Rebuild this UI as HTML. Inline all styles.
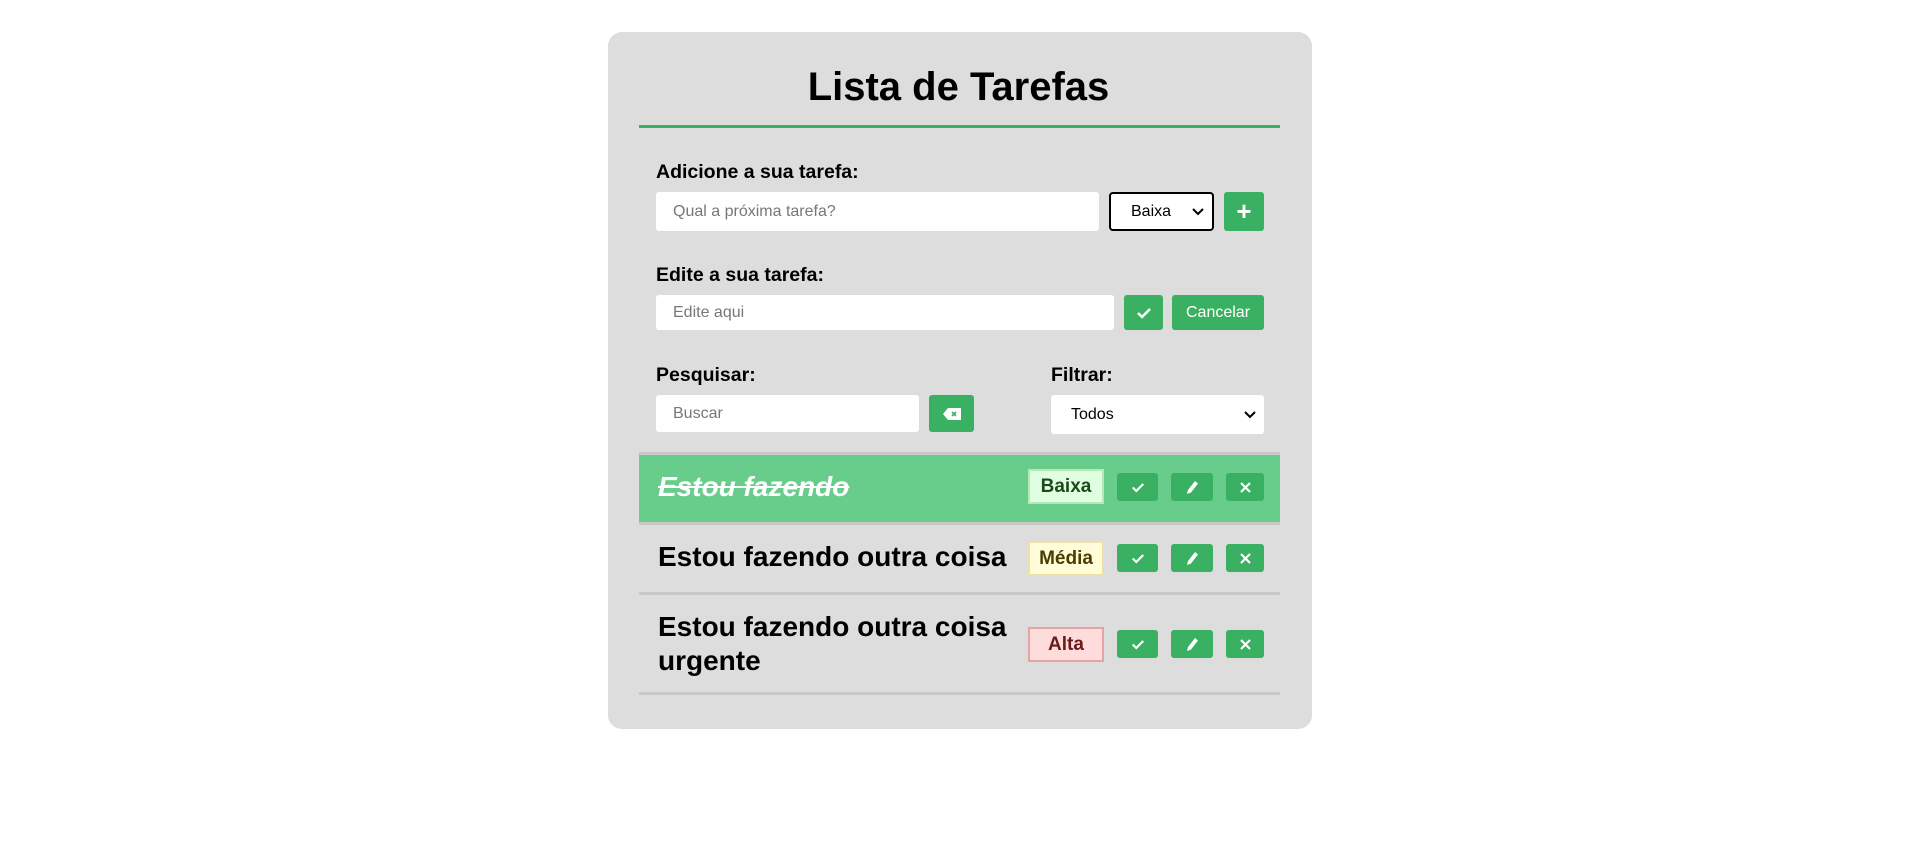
<!DOCTYPE html>
<html><head><meta charset="utf-8"><style>
*{box-sizing:border-box;margin:0;padding:0}
body{width:1917px;height:865px;background:#fff;font-family:"Liberation Sans",sans-serif;position:relative;overflow:hidden}
.c{position:absolute;left:608px;top:32px;width:704px;height:697px;background:#dddddd;border-radius:14px}
.a{position:absolute}
h1{position:absolute;left:0;width:100%;top:62px;text-align:center;font-size:40px;font-weight:bold;color:#000;line-height:50px}
.line{position:absolute;left:639px;width:641px;height:3px;background:#3ab062}
.lbl{position:absolute;font-size:19.5px;font-weight:bold;color:#000}
.in{position:absolute;background:#fff;border-radius:3px;font-size:16px;color:#777;padding-left:17px;display:flex;align-items:center}
.btn{position:absolute;background:#39b062;border-radius:3px;color:#fff;display:flex;align-items:center;justify-content:center}
.sel{position:absolute;background:#fff;border-radius:3px;font-size:16px;color:#000;display:flex;align-items:center;justify-content:space-between;padding:0 8px 0 20px}
.sep{position:absolute;left:639px;width:641px;height:3px;background:#c8c8c8}
.tt{position:absolute;left:658px;font-size:28px;font-weight:bold;color:#000;line-height:34px}
.bd{position:absolute;left:1028px;width:76px;font-size:19px;font-weight:bold;display:flex;align-items:center;justify-content:center;border:2px solid}
</style></head><body>
<div class="c"></div>
<h1>Lista de Tarefas</h1>
<div class="line" style="top:125px"></div>

<div class="lbl" style="left:656px;top:161px">Adicione a sua tarefa:</div>
<div class="in" style="left:656px;top:192px;width:443px;height:39px">Qual a próxima tarefa?</div>
<div class="sel" style="left:1109px;top:192px;width:105px;height:39px;border:2px solid #000;border-radius:4px;padding-left:20px">Baixa<svg width="12" height="8" viewBox="0 0 12 8"><path d="M1 1l5 5 5-5" stroke="#000" stroke-width="2" fill="none"/></svg></div>
<div class="btn" style="left:1224px;top:192px;width:40px;height:39px;font-size:26px;font-weight:bold">+</div>

<div class="lbl" style="left:656px;top:264px">Edite a sua tarefa:</div>
<div class="in" style="left:656px;top:295px;width:458px;height:35px">Edite aqui</div>
<div class="btn" style="left:1124px;top:295px;width:39px;height:35px"><svg width="16" height="12" viewBox="0 0 16 12"><path d="M2 6l4 4 8-8" stroke="#fff" stroke-width="2.5" fill="none"/></svg></div>
<div class="btn" style="left:1172px;top:295px;width:92px;height:35px;font-size:16px">Cancelar</div>

<div class="lbl" style="left:656px;top:364px">Pesquisar:</div>
<div class="lbl" style="left:1051px;top:364px">Filtrar:</div>
<div class="in" style="left:656px;top:395px;width:263px;height:37px">Buscar</div>
<div class="btn" style="left:929px;top:395px;width:45px;height:37px"><svg width="20" height="14" viewBox="0 0 20 14"><path d="M6 1h13v12H6L1 7z" fill="#fff"/><path d="M10 5l4 4M14 5l-4 4" stroke="#39b062" stroke-width="1.6"/></svg></div>
<div class="sel" style="left:1051px;top:395px;width:213px;height:39px">Todos<svg width="12" height="8" viewBox="0 0 12 8"><path d="M1 1l5 5 5-5" stroke="#000" stroke-width="2" fill="none"/></svg></div>

<div class="sep" style="top:452px"></div>
<div class="a" style="left:639px;top:455px;width:641px;height:67px;background:#68cd8a"></div>
<div class="tt" style="top:470px;color:#fff;font-style:italic;text-decoration:line-through">Estou fazendo</div>
<div class="bd" style="top:469px;height:35px;background:#e0ffe0;border-color:#b8e8b8;color:#1d4a1d">Baixa</div>
<div class="sep" style="top:522px"></div>

<div class="tt" style="top:540px">Estou fazendo outra coisa</div>
<div class="bd" style="top:541px;height:35px;background:#fffcd8;border-color:#ece2a8;color:#4a3d00">Média</div>
<div class="sep" style="top:592px"></div>

<div class="tt" style="top:610px">Estou fazendo outra coisa<br>urgente</div>
<div class="bd" style="top:627px;height:35px;background:#ffdcdc;border-color:#e4a4a4;color:#6a1a1a">Alta</div>
<div class="sep" style="top:692px"></div>

<div class="btn" style="left:1117px;top:473px;width:41px;height:28px"><svg width="14" height="11" viewBox="0 0 16 12"><path d="M2 6l4 4 8-8" stroke="#fff" stroke-width="2.5" fill="none"/></svg></div>
<div class="btn" style="left:1171px;top:473px;width:42px;height:28px"><svg width="14" height="16" viewBox="0 0 14 16"><path d="M2 15l1-4 7-9 3 2.5-7 9z" fill="#fff"/></svg></div>
<div class="btn" style="left:1226px;top:473px;width:38px;height:28px"><svg width="11" height="11" viewBox="0 0 11 11"><path d="M1 1l9 9M10 1l-9 9" stroke="#fff" stroke-width="2.2"/></svg></div>

<div class="btn" style="left:1117px;top:544px;width:41px;height:28px"><svg width="14" height="11" viewBox="0 0 16 12"><path d="M2 6l4 4 8-8" stroke="#fff" stroke-width="2.5" fill="none"/></svg></div>
<div class="btn" style="left:1171px;top:544px;width:42px;height:28px"><svg width="14" height="16" viewBox="0 0 14 16"><path d="M2 15l1-4 7-9 3 2.5-7 9z" fill="#fff"/></svg></div>
<div class="btn" style="left:1226px;top:544px;width:38px;height:28px"><svg width="11" height="11" viewBox="0 0 11 11"><path d="M1 1l9 9M10 1l-9 9" stroke="#fff" stroke-width="2.2"/></svg></div>

<div class="btn" style="left:1117px;top:630px;width:41px;height:28px"><svg width="14" height="11" viewBox="0 0 16 12"><path d="M2 6l4 4 8-8" stroke="#fff" stroke-width="2.5" fill="none"/></svg></div>
<div class="btn" style="left:1171px;top:630px;width:42px;height:28px"><svg width="14" height="16" viewBox="0 0 14 16"><path d="M2 15l1-4 7-9 3 2.5-7 9z" fill="#fff"/></svg></div>
<div class="btn" style="left:1226px;top:630px;width:38px;height:28px"><svg width="11" height="11" viewBox="0 0 11 11"><path d="M1 1l9 9M10 1l-9 9" stroke="#fff" stroke-width="2.2"/></svg></div>
</body></html>
